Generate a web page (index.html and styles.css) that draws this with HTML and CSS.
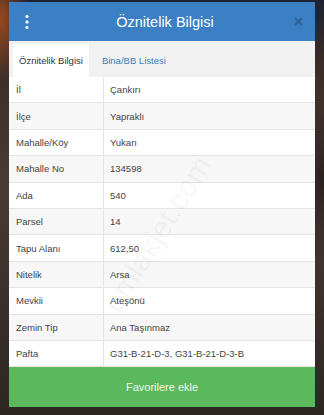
FILE: index.html
```html
<!DOCTYPE html>
<html lang="tr">
<head>
<meta charset="utf-8">
<title>Öznitelik Bilgisi</title>
<link rel="stylesheet" href="styles.css">
</head>
<body>
<div class="modal">
  <div class="header">
    <span class="menu-icon">
      <svg width="6" height="16" viewBox="0 0 6 16"><circle cx="3" cy="2.5" r="1.7"/><circle cx="3" cy="8" r="1.7"/><circle cx="3" cy="13.5" r="1.7"/></svg>
    </span>
    <span class="title">Öznitelik Bilgisi</span>
    <span class="close-icon">
      <svg width="9" height="9" viewBox="0 0 9 9"><path d="M1 1 L8 8 M8 1 L1 8"/></svg>
    </span>
  </div>
  <div class="tabs">
    <span class="tab active">Öznitelik Bilgisi</span>
    <span class="tab">Bina/BB Listesi</span>
  </div>
  <div class="table">
    <div class="row"><span class="key">İl</span><span class="val">Çankırı</span></div>
    <div class="row alt"><span class="key">İlçe</span><span class="val">Yapraklı</span></div>
    <div class="row"><span class="key">Mahalle/Köy</span><span class="val">Yukarı</span></div>
    <div class="row alt"><span class="key">Mahalle No</span><span class="val">134598</span></div>
    <div class="row"><span class="key">Ada</span><span class="val">540</span></div>
    <div class="row alt"><span class="key">Parsel</span><span class="val">14</span></div>
    <div class="row"><span class="key">Tapu Alanı</span><span class="val">612,50</span></div>
    <div class="row alt"><span class="key">Nitelik</span><span class="val">Arsa</span></div>
    <div class="row"><span class="key">Mevkii</span><span class="val">Ateşönü</span></div>
    <div class="row alt"><span class="key">Zemin Tip</span><span class="val">Ana Taşınmaz</span></div>
    <div class="row"><span class="key">Pafta</span><span class="val">G31-B-21-D-3, G31-B-21-D-3-B</span></div>
    <div class="watermark">emlakjet.com</div>
  </div>
  <div class="button">Favorilere ekle</div>
</div>
</body>
</html>
```
FILE: styles.css
```css
html, body {
  margin: 0;
  padding: 0;
}
body {
  width: 324px;
  height: 415px;
  overflow: hidden;
  font-family: "Liberation Sans", Arial, sans-serif;
  background:
    radial-gradient(ellipse 30px 60px at 0 20px, #9a4a1e 0%, rgba(154,74,30,0) 100%),
    radial-gradient(ellipse 40px 80px at 324px 180px, #2a2220 0%, rgba(42,34,32,0) 100%),
    linear-gradient(180deg, #1e2230 0px, #3a2c28 60px, #4a3a34 180px, #3a302c 300px, #2c2622 415px);
  padding-top: 2px;
  box-sizing: border-box;
}
.modal {
  margin: 0 9px;
  width: 306px;
  background: #fff;
  display: flex;
  flex-direction: column;
}
.header {
  height: 39px;
  background: #3b7fc4;
  display: flex;
  align-items: center;
  justify-content: space-between;
  padding: 0 12px 0 15px;
}
.menu-icon svg {
  display: block;
  fill: #e8f0f8;
}
.title {
  color: #fff;
  font-size: 14.5px;
  margin-left: 6px;
}
.close-icon svg {
  display: block;
  stroke: #2f6396;
  stroke-width: 2.2;
}
.tabs {
  height: 36px;
  background: #f1f1f1;
  box-sizing: border-box;
  padding: 3px 5px 0 4px;
  display: flex;
  align-items: stretch;
}
.tab {
  font-size: 9.5px;
  display: flex;
  align-items: center;
  padding: 0 6px 0 9px;
  color: #3b7fc4;
}
.tab.active {
  background: #fff;
  color: #333;
  padding: 0 6px;
  margin-right: 4px;
}
.table {
  position: relative;
  overflow: hidden;
}
.row {
  height: 26.4px;
  display: flex;
  align-items: center;
  box-sizing: border-box;
  border-bottom: 1px solid #e4e4e4;
  font-size: 9.5px;
  color: #444;
  background: #fff;
}
.row:last-of-type {
  border-bottom: none;
}
.row.alt {
  background: #f7f7f7;
}
.key {
  width: 95px;
  box-sizing: border-box;
  padding-left: 7px;
  align-self: stretch;
  display: flex;
  align-items: center;
  border-right: 1px solid #e4e4e4;
}
.val {
  padding-left: 6px;
}
.watermark {
  position: absolute;
  left: 60px;
  top: 140px;
  font-size: 30px;
  color: rgba(0,0,0,0.05);
  transform: rotate(-58deg);
  pointer-events: none;
  white-space: nowrap;
}
.button {
  height: 40px;
  background: #5cb85c;
  color: #eef8ee;
  font-size: 11px;
  display: flex;
  align-items: center;
  justify-content: center;
}
```
